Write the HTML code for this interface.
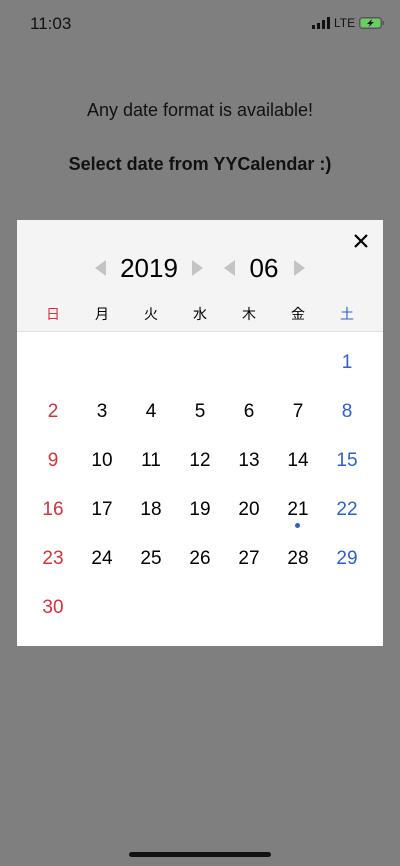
<!DOCTYPE html><html><head><meta charset="utf-8"><style>
body{margin:0;width:400px;height:866px;background:#7f7f7f;font-family:"Liberation Sans","Noto Sans CJK JP",sans-serif;position:relative;overflow:hidden;color:#000}
.a{position:absolute}
.c{position:absolute;width:40px;margin-left:-20px;text-align:center}
.r{color:#d4323a}.b{color:#2d5fd1}
.tri{position:absolute;width:0;height:0;border-top:8px solid transparent;border-bottom:8px solid transparent}
.l{border-right:11px solid #c4c4c4}.rt{border-left:11px solid #c4c4c4}
</style></head><body>
<div class="a" style="left:30px;top:14px;font-size:17px;font-weight:500;color:#111">11:03</div>
<svg class="a" style="left:312px;top:17px" width="20" height="12"><rect x="0" y="8" width="3" height="4" fill="#111"/><rect x="5" y="6" width="3" height="6" fill="#111"/><rect x="10" y="3" width="3" height="9" fill="#111"/><rect x="15" y="0" width="3" height="12" fill="#111"/></svg>
<div class="a" style="left:334px;top:16px;font-size:12px;color:#111">LTE</div>
<svg class="a" style="left:359px;top:17px" width="26" height="13"><rect x="0.5" y="0.5" width="22" height="11" rx="3" fill="none" stroke="#555"/><rect x="2" y="2" width="19" height="8" rx="1.5" fill="#5fd35a"/><rect x="23.5" y="4" width="1.5" height="4" fill="#555"/><path d="M13 2 L8 7 H11 L9.5 10 L15 5 H12 Z" fill="#111"/></svg>
<div class="a" style="left:0;width:400px;top:100px;text-align:center;font-size:18px;color:#111">Any date format is available!</div>
<div class="a" style="left:0;width:400px;top:154px;text-align:center;font-size:18px;font-weight:bold;color:#111">Select date from YYCalendar :)</div>
<div class="a" style="left:17px;top:220px;width:366px;height:426px;background:#fff"></div>
<div class="a" style="left:17px;top:220px;width:366px;height:111px;background:#f4f4f4;border-bottom:1px solid #e2e2e2"></div>
<svg class="a" style="left:353px;top:233px" width="16" height="16"><path d="M2 2L14 14M14 2L2 14" stroke="#000" stroke-width="2.2"/></svg>
<div class="tri l" style="left:95px;top:260px"></div>
<div class="a" style="left:113px;top:253px;width:72px;text-align:center;font-size:26px">2019</div>
<div class="tri rt" style="left:192px;top:260px"></div>
<div class="tri l" style="left:224px;top:260px"></div>
<div class="a" style="left:240px;top:253px;width:48px;text-align:center;font-size:26px">06</div>
<div class="tri rt" style="left:294px;top:260px"></div>
<div style="font-size:14px">
<div class="c a r" style="left:53px;top:304px">日</div><div class="c a" style="left:102px;top:304px">月</div><div class="c a" style="left:151px;top:304px">火</div><div class="c a" style="left:200px;top:304px">水</div><div class="c a" style="left:249px;top:304px">木</div><div class="c a" style="left:298px;top:304px">金</div><div class="c a b" style="left:347px;top:304px">土</div>
</div>
<div style="font-size:19px">
<div class="c b" style="left:347px;top:352px">1</div>
<div class="c r" style="left:53px;top:401px">2</div><div class="c" style="left:102px;top:401px">3</div><div class="c" style="left:151px;top:401px">4</div><div class="c" style="left:200px;top:401px">5</div><div class="c" style="left:249px;top:401px">6</div><div class="c" style="left:298px;top:401px">7</div><div class="c b" style="left:347px;top:401px">8</div>
<div class="c r" style="left:53px;top:450px">9</div><div class="c" style="left:102px;top:450px">10</div><div class="c" style="left:151px;top:450px">11</div><div class="c" style="left:200px;top:450px">12</div><div class="c" style="left:249px;top:450px">13</div><div class="c" style="left:298px;top:450px">14</div><div class="c b" style="left:347px;top:450px">15</div>
<div class="c r" style="left:53px;top:499px">16</div><div class="c" style="left:102px;top:499px">17</div><div class="c" style="left:151px;top:499px">18</div><div class="c" style="left:200px;top:499px">19</div><div class="c" style="left:249px;top:499px">20</div><div class="c" style="left:298px;top:499px">21</div><div class="c b" style="left:347px;top:499px">22</div>
<div class="c r" style="left:53px;top:548px">23</div><div class="c" style="left:102px;top:548px">24</div><div class="c" style="left:151px;top:548px">25</div><div class="c" style="left:200px;top:548px">26</div><div class="c" style="left:249px;top:548px">27</div><div class="c" style="left:298px;top:548px">28</div><div class="c b" style="left:347px;top:548px">29</div>
<div class="c r" style="left:53px;top:597px">30</div>
</div>
<div class="a" style="left:295px;top:523px;width:5px;height:5px;border-radius:50%;background:#2d5fd1"></div>
<div class="a" style="left:129px;top:852px;width:142px;height:5px;border-radius:3px;background:#111"></div>
</body></html>
